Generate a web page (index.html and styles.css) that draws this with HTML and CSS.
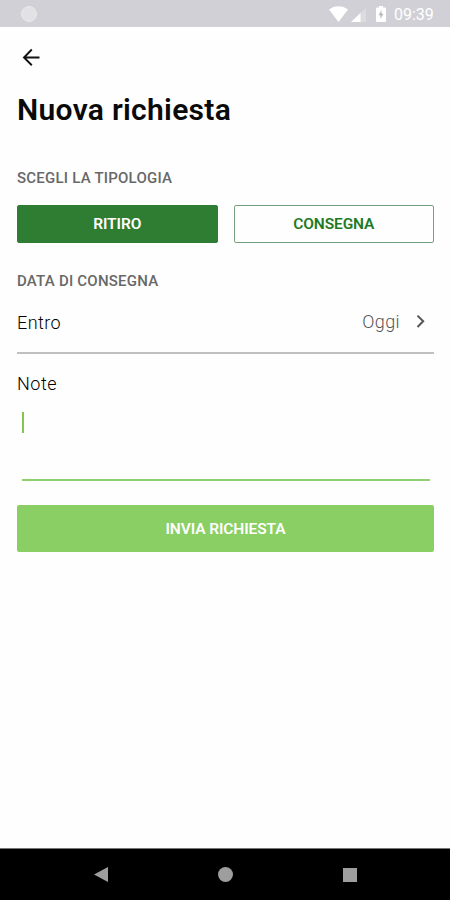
FILE: index.html
```html
<!DOCTYPE html>
<html lang="it">
<head>
  <meta charset="UTF-8" />
  <meta name="viewport" content="width=device-width, initial-scale=1.0" />
  <title>Nuova richiesta</title>
  <link rel="stylesheet" href="styles.css">
</head>
<body>
  <div class="status-bar">
    <span class="status-dot"></span>
    <div class="status-icons">
      <svg class="wifi" width="19" height="16" viewBox="0 0 19 16"><path d="M0 3.6C5.5-.9 13.5-.9 19 3.6L9.5 16z" fill="#fff"/></svg>
      <svg class="signal" width="15" height="14" viewBox="0 0 15 14"><path d="M0 14L15 0v14z" fill="#dcdce0"/><path d="M0 14L9.5 5v9z" fill="#fff"/></svg>
      <svg class="battery" width="10" height="16" viewBox="0 0 10 16"><path d="M3 0h4v1.5h2q1 0 1 1V15q0 1-1 1H1q-1 0-1-1V2.500q0-1 1-1h2z" fill="#fff"/><path d="M5.600 4L2.500 9.300h2V13l3-5.300h-1.900z" fill="#b9b9be"/></svg>
      <span class="clock">09:39</span>
    </div>
  </div>

  <main>
    <button type="button" class="back-btn" aria-label="Indietro">
      <svg width="18" height="18" viewBox="0 0 18 18"><path d="M17.500 9.500H2M9.800 1.500L2 9.500L9.800 17.200" fill="none" stroke="#111" stroke-width="1.900"/></svg>
    </button>
    <h1>Nuova richiesta</h1>

    <h2>SCEGLI LA TIPOLOGIA</h2>
    <div class="types">
      <button type="button" class="type-btn active">RITIRO</button>
      <button type="button" class="type-btn">CONSEGNA</button>
    </div>

    <h2>DATA DI CONSEGNA</h2>
    <div class="date-row">
      <span class="date-label">Entro</span>
      <span class="date-value">Oggi</span>
      <svg width="10" height="14" viewBox="0 0 10 14"><path d="M1.500 1.600L7.200 7.300L1.500 13" fill="none" stroke="#555" stroke-width="2"/></svg>
    </div>

    <div class="note-label">Note</div>
    <div class="note-field"><span class="cursor"></span></div>

    <button type="button" class="submit-btn">INVIA RICHIESTA</button>
  </main>

  <nav class="nav-bar">
    <svg width="14" height="15" viewBox="0 0 14 15"><path d="M0 7.500L14 0v15z" fill="#9e9e9e"/></svg>
    <svg width="15" height="15" viewBox="0 0 15 15"><circle cx="7.500" cy="7.500" r="7.500" fill="#9e9e9e"/></svg>
    <svg width="14" height="14" viewBox="0 0 14 14"><rect width="14" height="14" fill="#9e9e9e"/></svg>
  </nav>
</body>
</html>
```
FILE: styles.css
```css
* {
  box-sizing: border-box;
}
body {
  margin: 0;
  height: 900px;
  display: flex;
  flex-direction: column;
  overflow: hidden;
  background: #fefefe;
  color: #111;
  font-family: Roboto, sans-serif;
}
svg {
  display: block;
  flex: none;
}
button {
  margin: 0;
  padding: 0;
  border: none;
  background: none;
  font-family: inherit;
  cursor: pointer;
}
.status-bar {
  height: 27px;
  padding: 0 16px 0 21px;
  display: flex;
  align-items: center;
  justify-content: space-between;
  background: #d1d0d6;
}
.status-dot {
  width: 16px;
  height: 16px;
  border-radius: 50%;
  background: #e2e1e5;
  border: 1px solid #ebebee;
}
.status-icons {
  display: flex;
  align-items: center;
  color: #fff;
}
.signal {
  margin: 2px 10px 0 3px;
}
.clock {
  margin-left: 8px;
  width: 40px;
  font-size: 16px;
  line-height: 29px;
  height: 27px;
  white-space: nowrap;
}
main {
  flex: 1;
  padding: 20px 16px 0 17px;
}
.back-btn {
  display: block;
  height: 19px;
  padding-left: 5px;
}
h1 {
  margin: 24px 0 0;
  font-size: 30px;
  line-height: 40px;
  font-weight: 600;
  letter-spacing: 0.3px;
  color: #0a0a0a;
}
h2 {
  margin: 38px 0 0;
  font-size: 15px;
  line-height: 20px;
  font-weight: 500;
  letter-spacing: 0.22px;
  color: #686868;
}
.types {
  display: flex;
  gap: 16px;
  margin-top: 17px;
}
.type-btn {
  flex: 1;
  height: 38px;
  border: 1px solid #75a182;
  border-radius: 2px;
  color: #1f7a25;
  font-size: 15.5px;
  font-weight: 600;
  letter-spacing: -0.1px;
}
.type-btn.active {
  background: #2e7d32;
  border-color: #2e7d32;
  color: #fff;
}
.types + h2 {
  margin-top: 28px;
}
.date-row {
  display: flex;
  align-items: center;
  height: 63px;
  padding-right: 8px;
  border-bottom: 2px solid #c0c0c0;
  font-size: 18px;
  font-weight: 300;
  letter-spacing: 0.4px;
}
.date-label {
  flex: 1;
  padding-top: 1px;
}
.date-value {
  margin-right: 16px;
  padding-bottom: 1px;
  color: #555;
}
.date-row svg {
  margin-bottom: 1px;
}
.note-label {
  margin-top: 19px;
  font-size: 18px;
  line-height: 22px;
  font-weight: 300;
  letter-spacing: 0.5px;
}
.date-label,
.note-label {
  color: #000;
}
.note-field {
  height: 86px;
  margin: 0 4px 0 5px;
  padding-top: 17px;
  border-bottom: 2px solid #8fd071;
}
.cursor {
  display: block;
  width: 2px;
  height: 21px;
  background: #84c651;
}
.submit-btn {
  display: block;
  width: 100%;
  height: 47px;
  margin-top: 24px;
  padding-top: 1px;
  border-radius: 2px;
  background: #89cf64;
  color: #fff;
  font-size: 15.5px;
  font-weight: 600;
  letter-spacing: -0.1px;
}
.nav-bar {
  height: 52px;
  display: flex;
  align-items: center;
  justify-content: space-between;
  padding: 0 93px 0 94px;
  border-top: 1px solid #777;
  background: #000;
}
```
